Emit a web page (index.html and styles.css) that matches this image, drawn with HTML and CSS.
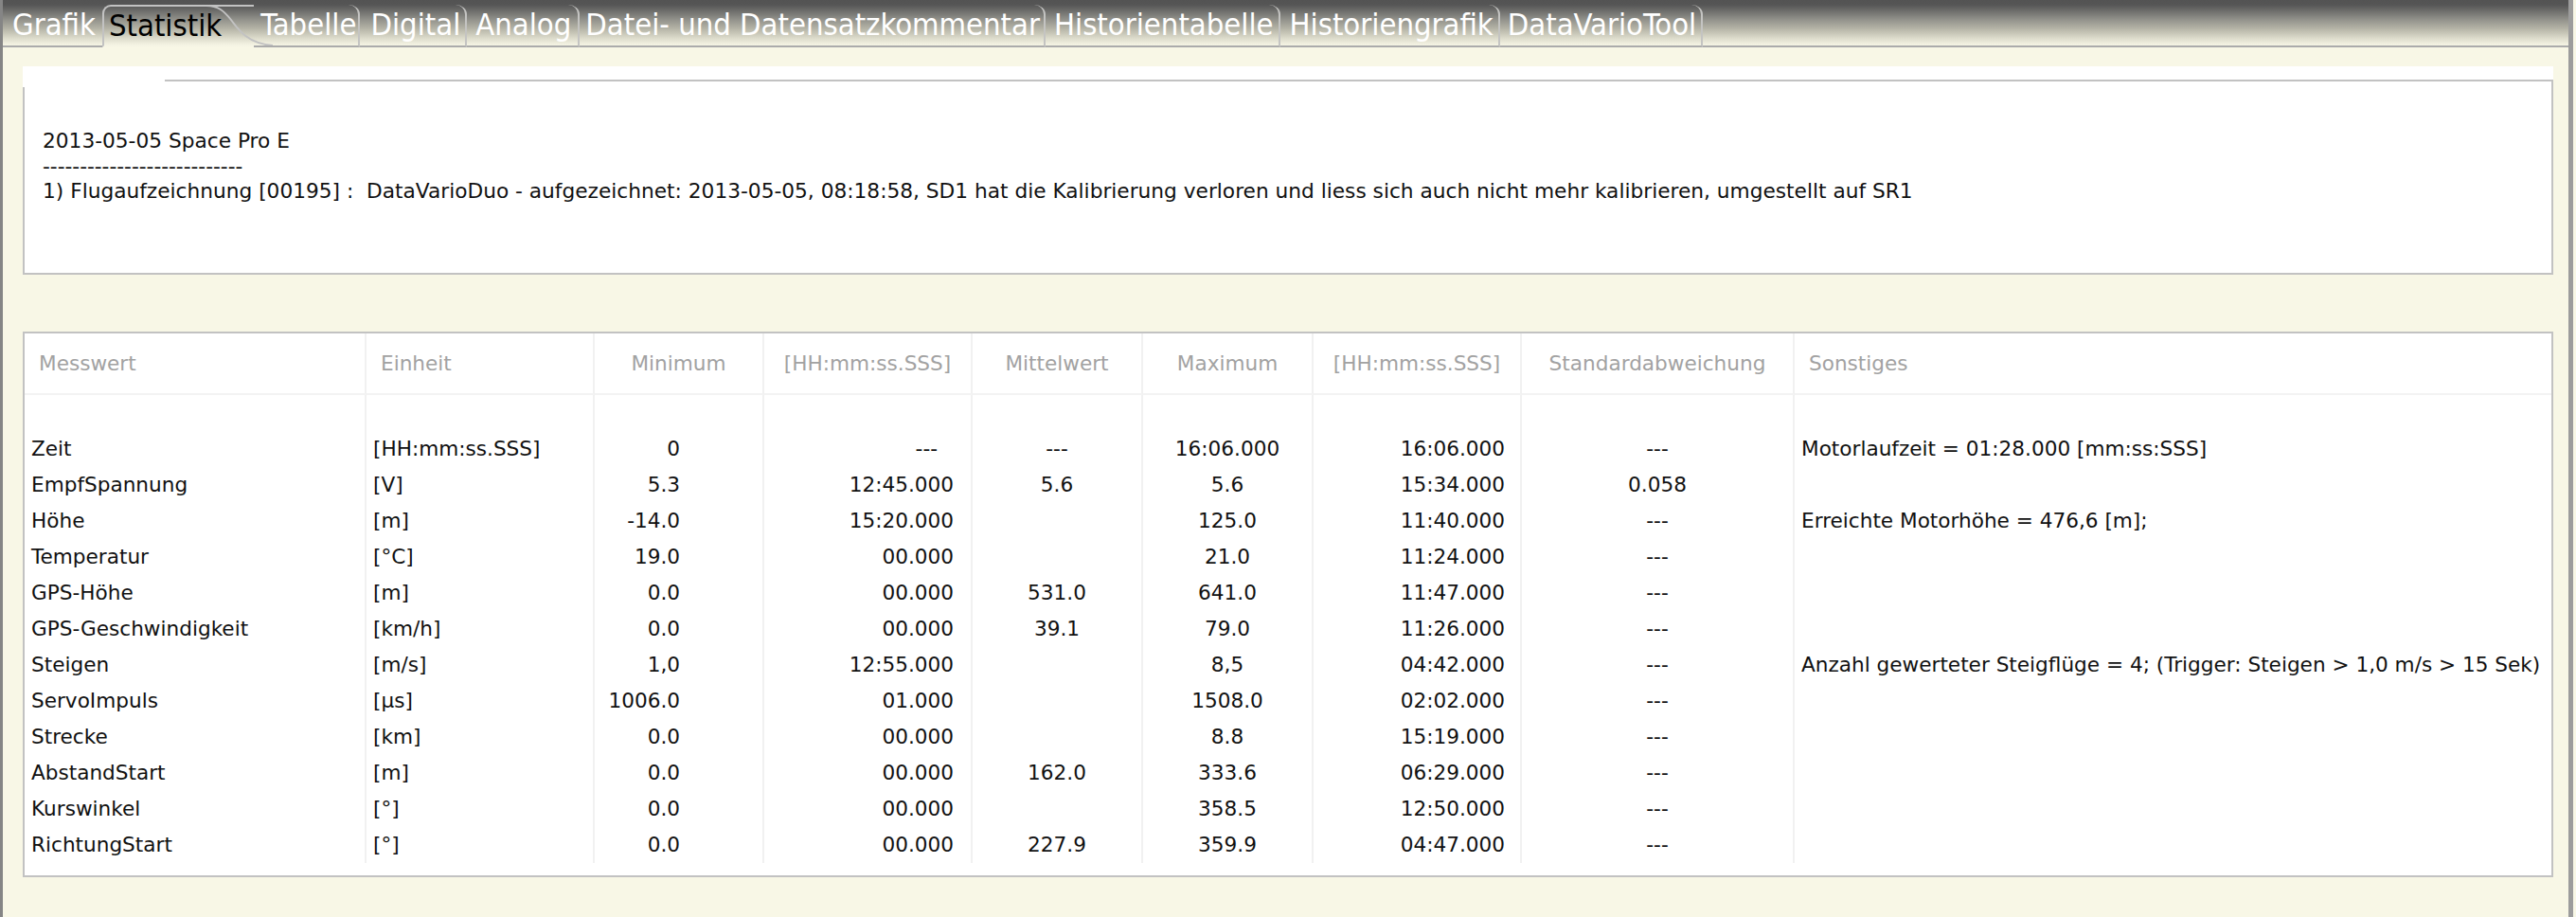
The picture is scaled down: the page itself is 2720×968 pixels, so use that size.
FILE: index.html
```html
<!DOCTYPE html>
<html lang="de">
<head>
<meta charset="utf-8">
<title>Statistik</title>
<link rel="stylesheet" href="styles.css">
</head>
<body>
<div class="window">
  <div class="tabbar">
    <div class="tab t-grafik">Grafik</div>
    <div class="tab active">Statistik<svg class="slant" width="72" height="45" viewBox="0 0 72 45"><path d="M0,1 C12,1 18,6 26,16 C34,27 44,41 70,43" fill="none" stroke="#c2c2c2" stroke-width="2"/></svg></div>
    <div class="tab sep t-tabelle">Tabelle</div>
    <div class="tab sep t-digital">Digital</div>
    <div class="tab sep t-analog">Analog</div>
    <div class="tab sep t-datei">Datei- und Datensatzkommentar</div>
    <div class="tab sep t-htab">Historientabelle</div>
    <div class="tab sep t-hgraf">Historiengrafik</div>
    <div class="tab sep t-dvt">DataVarioTool</div>
    <div class="tab-fill"></div>
  </div>

  <div class="content">
    <div class="comment-panel">
      <div class="group-top"><div class="group-gap"></div><div class="group-line"></div></div>
      <div class="group-body">
        <div class="comment-text">2013-05-05 Space Pro E
---------------------------
1) Flugaufzeichnung [00195] :  DataVarioDuo - aufgezeichnet: 2013-05-05, 08:18:58, SD1 hat die Kalibrierung verloren und liess sich auch nicht mehr kalibrieren, umgestellt auf SR1</div>
      </div>
    </div>

    <div class="table-panel">
      <table class="stats">
        <colgroup>
          <col class="c1"><col class="c2"><col class="c3"><col class="c4"><col class="c5"><col class="c6"><col class="c7"><col class="c8"><col class="c9">
        </colgroup>
        <thead>
          <tr>
            <th class="left">Messwert</th>
            <th class="left">Einheit</th>
            <th>Minimum</th>
            <th>[HH:mm:ss.SSS]</th>
            <th>Mittelwert</th>
            <th>Maximum</th>
            <th>[HH:mm:ss.SSS]</th>
            <th>Standardabweichung</th>
            <th class="left">Sonstiges</th>
          </tr>
        </thead>
        <tbody>
          <tr class="blank"><td></td><td></td><td></td><td></td><td></td><td></td><td></td><td></td><td></td></tr>
          <tr><td>Zeit</td><td>[HH:mm:ss.SSS]</td><td class="min">0</td><td class="t1 dash">---</td><td class="ctr">---</td><td class="ctr">16:06.000</td><td class="t2">16:06.000</td><td class="ctr">---</td><td>Motorlaufzeit = 01:28.000 [mm:ss:SSS]</td></tr>
          <tr><td>EmpfSpannung</td><td>[V]</td><td class="min">5.3</td><td class="t1">12:45.000</td><td class="ctr">5.6</td><td class="ctr">5.6</td><td class="t2">15:34.000</td><td class="ctr">0.058</td><td></td></tr>
          <tr><td>Höhe</td><td>[m]</td><td class="min">-14.0</td><td class="t1">15:20.000</td><td class="ctr"></td><td class="ctr">125.0</td><td class="t2">11:40.000</td><td class="ctr">---</td><td>Erreichte Motorhöhe = 476,6 [m];</td></tr>
          <tr><td>Temperatur</td><td>[°C]</td><td class="min">19.0</td><td class="t1">00.000</td><td class="ctr"></td><td class="ctr">21.0</td><td class="t2">11:24.000</td><td class="ctr">---</td><td></td></tr>
          <tr><td>GPS-Höhe</td><td>[m]</td><td class="min">0.0</td><td class="t1">00.000</td><td class="ctr">531.0</td><td class="ctr">641.0</td><td class="t2">11:47.000</td><td class="ctr">---</td><td></td></tr>
          <tr><td>GPS-Geschwindigkeit</td><td>[km/h]</td><td class="min">0.0</td><td class="t1">00.000</td><td class="ctr">39.1</td><td class="ctr">79.0</td><td class="t2">11:26.000</td><td class="ctr">---</td><td></td></tr>
          <tr><td>Steigen</td><td>[m/s]</td><td class="min">1,0</td><td class="t1">12:55.000</td><td class="ctr"></td><td class="ctr">8,5</td><td class="t2">04:42.000</td><td class="ctr">---</td><td>Anzahl gewerteter Steigflüge = 4; (Trigger: Steigen &gt; 1,0 m/s &gt; 15 Sek)</td></tr>
          <tr><td>ServoImpuls</td><td>[µs]</td><td class="min">1006.0</td><td class="t1">01.000</td><td class="ctr"></td><td class="ctr">1508.0</td><td class="t2">02:02.000</td><td class="ctr">---</td><td></td></tr>
          <tr><td>Strecke</td><td>[km]</td><td class="min">0.0</td><td class="t1">00.000</td><td class="ctr"></td><td class="ctr">8.8</td><td class="t2">15:19.000</td><td class="ctr">---</td><td></td></tr>
          <tr><td>AbstandStart</td><td>[m]</td><td class="min">0.0</td><td class="t1">00.000</td><td class="ctr">162.0</td><td class="ctr">333.6</td><td class="t2">06:29.000</td><td class="ctr">---</td><td></td></tr>
          <tr><td>Kurswinkel</td><td>[°]</td><td class="min">0.0</td><td class="t1">00.000</td><td class="ctr"></td><td class="ctr">358.5</td><td class="t2">12:50.000</td><td class="ctr">---</td><td></td></tr>
          <tr><td>RichtungStart</td><td>[°]</td><td class="min">0.0</td><td class="t1">00.000</td><td class="ctr">227.9</td><td class="ctr">359.9</td><td class="t2">04:47.000</td><td class="ctr">---</td><td></td></tr>
        </tbody>
      </table>
    </div>
  </div>
</div>
</body>
</html>
```

FILE: styles.css
```css
html, body {
  margin: 0;
  padding: 0;
}
body {
  background: #f8f7e6;
  font-family: "DejaVu Sans", "Liberation Sans", sans-serif;
  color: #111;
}
.window {
  box-sizing: border-box;
  width: 2717px;
  height: 968px;
  border-left: 3px solid #858585;
  border-right: 5px solid #9c9c9c;
  background: #f8f7e6;
  display: flex;
  flex-direction: column;
}

/* ---------- tab bar ---------- */
.tabbar {
  display: flex;
  height: 50px;
  flex: none;
  background: linear-gradient(to bottom, #535353 0px, #555555 5px, #6f6f6d 12px, #8f8f89 20px, #b4b3a6 30px, #d7d6c6 39px, #f3f2e2 47px, #f8f7e6 50px);
}
.tab {
  position: relative;
  margin-top: 5px;
  height: 43px;
  line-height: 42px;
  border-bottom: 2px solid #ababab;
  font-family: "DejaVu Sans Condensed", "DejaVu Sans", sans-serif;
  font-stretch: condensed;
  font-size: 32.5px;
  color: #ffffff;
  white-space: nowrap;
  padding: 0 4px 0 8px;
}
.tab.sep {
  border-right: 2px solid #c4c4c2;
  border-top-right-radius: 12px 10px;
}
.tab-fill {
  flex: 1;
  margin-top: 5px;
  border-bottom: 2px solid #ababab;
}
.t-grafik { padding: 0 7px 0 10px; }
.tab.active {
  color: #000;
  height: 41px;
  border-left: 2px solid #c2c2c2;
  border-top: 2px solid #c2c2c2;
  border-top-left-radius: 9px;
  border-bottom: 2px solid transparent;
  padding: 0 34px 0 5px;
  line-height: 40px;
}
.slant {
  position: absolute;
  left: 108px;
  top: -2px;
  overflow: visible;
}
.t-tabelle { padding-left: 7px; padding-right: 2px; }
.t-digital { padding-left: 11px; padding-right: 5px; }
.t-analog { padding-left: 9px; padding-right: 7px; }
.t-datei { padding-left: 6px; padding-right: 4px; }
.t-htab { padding-left: 9px; padding-right: 5px; }
.t-hgraf { padding-left: 10px; padding-right: 5px; }
.t-dvt { padding-left: 8px; padding-right: 5px; }

/* ---------- content ---------- */
.content {
  flex: 1;
  display: flex;
  flex-direction: column;
  padding: 20px 16px 0 21px;
}

.comment-panel {
  background: #ffffff;
  height: 220px;
  box-sizing: border-box;
  padding-top: 14px;
  display: flex;
  flex-direction: column;
}
.group-top {
  display: flex;
  height: 8px;
  flex: none;
}
.group-gap {
  width: 150px;
}
.group-line {
  flex: 1;
  border-top: 2px solid #c2c2c2;
  border-right: 2px solid #c2c2c2;
}
.group-body {
  flex: 1;
  border: 2px solid #c2c2c2;
  border-top: none;
  padding: 44px 18px 0 19px;
}
.comment-text {
  white-space: pre;
  font-size: 21.7px;
  line-height: 26.5px;
  color: #111;
}

.table-panel {
  margin-top: 60px;
  height: 576px;
  box-sizing: border-box;
  background: #ffffff;
  border: 2px solid #c2c2c2;
}
.stats {
  table-layout: fixed;
  border-collapse: separate;
  border-spacing: 0;
  width: 2668px;
  font-size: 21.6px;
}
.c1 { width: 361px; }
.c2 { width: 241px; }
.c3 { width: 179px; }
.c4 { width: 220px; }
.c5 { width: 180px; }
.c6 { width: 180px; }
.c7 { width: 220px; }
.c8 { width: 288px; }
.c9 { width: 799px; }

.stats th {
  height: 65px;
  box-sizing: border-box;
  font-weight: normal;
  color: #a2a2a2;
  text-align: center;
  padding: 0 4px;
  border-right: 2px solid #f1f1f1;
  border-bottom: 2px solid #f3f3f3;
  white-space: nowrap;
  overflow: visible;
}
.stats th.left {
  text-align: left;
  padding-left: 15px;
}
.stats th:last-child {
  border-right: none;
}
.stats td {
  height: 38px;
  box-sizing: border-box;
  padding: 0 7px;
  border-right: 2px solid #f1f1f1;
  white-space: nowrap;
  line-height: 38px;
  color: #111;
}
.stats td:last-child {
  border-right: none;
}
.stats td.min {
  text-align: right;
  padding-right: 87px;
}
.stats td.t1 {
  text-align: right;
  padding-right: 18px;
}
.stats td.t1.dash {
  padding-right: 35px;
}
.stats td.t2 {
  text-align: right;
  padding-right: 16px;
}
.stats td.ctr {
  text-align: center;
}
```
